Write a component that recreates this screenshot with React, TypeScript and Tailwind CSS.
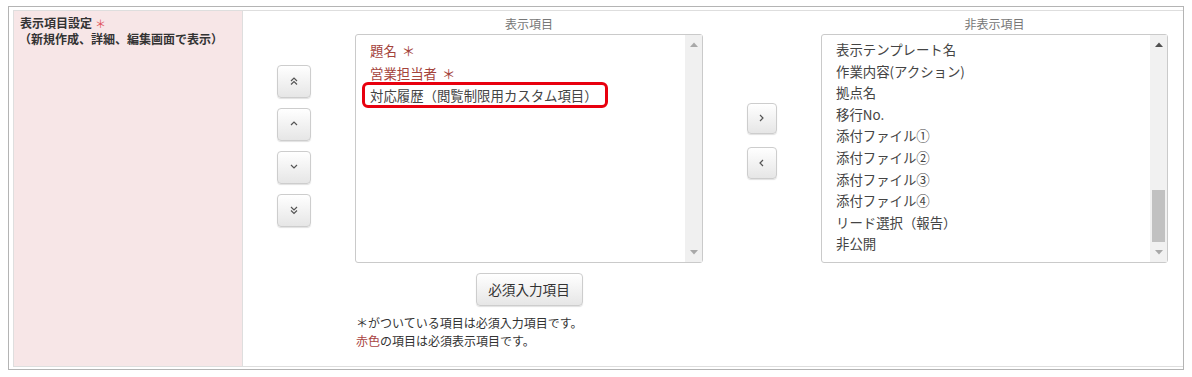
import React from "react";

const FONT = { fontFamily: '"Noto Sans CJK JP", "Noto Sans", sans-serif' };

function Chevron({ dir, double }: { dir: "up" | "down" | "left" | "right"; double?: boolean }) {
  const single = {
    up: "M1 5 L4 2 L7 5",
    down: "M1 2 L4 5 L7 2",
    left: "M5 1 L2 4 L5 7",
    right: "M2 1 L5 4 L2 7",
  }[dir];
  const dbl = {
    up: ["M1 4 L4 1 L7 4", "M1 7.5 L4 4.5 L7 7.5"],
    down: ["M1 1 L4 4 L7 1", "M1 4.5 L4 7.5 L7 4.5"],
    left: [],
    right: [],
  }[dir];
  return (
    <svg width="8" height="9" viewBox="0 0 8 9" fill="none" stroke="#555" strokeWidth="1.2">
      {double ? dbl.map((d, i) => <path key={i} d={d} />) : <path d={single} />}
    </svg>
  );
}

function Btn({ children, cls }: { children: React.ReactNode; cls: string }) {
  return (
    <div
      className={
        "flex items-center justify-center rounded-[4px] border border-[#cdcdcd] bg-gradient-to-b from-[#ffffff] to-[#e6e6e6] shadow-[0_1px_1px_rgba(0,0,0,0.12)] " +
        cls
      }
    >
      {children}
    </div>
  );
}

function Tri({ up, color }: { up?: boolean; color: string }) {
  return (
    <svg width="8" height="5" viewBox="0 0 8 5">
      <path d={up ? "M0 5 L4 0.5 L8 5 Z" : "M0 0 L4 4.5 L8 0 Z"} fill={color} />
    </svg>
  );
}

const RED = "text-[#a4433b]";

const leftItems: { t: string; star?: boolean }[] = [
  { t: "題名", star: true },
  { t: "営業担当者", star: true },
  { t: "対応履歴（閲覧制限用カスタム項目）" },
];

const rightItems = [
  "表示テンプレート名",
  "作業内容(アクション)",
  "拠点名",
  "移行No.",
  "添付ファイル①",
  "添付ファイル②",
  "添付ファイル③",
  "添付ファイル④",
  "リード選択（報告）",
  "非公開",
];

export default function App() {
  return (
    <div className="min-h-[377px] bg-white text-[#333]" style={FONT}>
      <div className="pt-[6px] pl-[8px]">
        <div className="w-[1176px] h-[364px] border border-[#b4b4b4] pl-[4px] pt-[3px] pb-[2px]">
          <div className="flex h-[357px] border-t border-l border-b border-[#dedede]">
            {/* label cell */}
            <div className="w-[229px] shrink-0 border-r border-[#dedede] bg-[#f7e6e7] pl-[6px] pt-[4px] text-[12px] font-bold leading-[16px] text-[#333]">
              <div>
                表示項目設定<span className="ml-[3px] text-[11px] font-normal text-[#e0525a]">＊</span>
              </div>
              <div className="-ml-[1px]">（新規作成、詳細、編集画面で表示）</div>
            </div>

            {/* content cell */}
            <div className="flex flex-1 items-start pl-[34px]">
              {/* order buttons */}
              <div className="mt-[54px] flex w-[34px] flex-col gap-[10px]">
                <Btn cls="h-[33px]"><Chevron dir="up" double /></Btn>
                <Btn cls="h-[33px]"><Chevron dir="up" /></Btn>
                <Btn cls="h-[33px]"><Chevron dir="down" /></Btn>
                <Btn cls="h-[33px]"><Chevron dir="down" double /></Btn>
              </div>

              {/* visible list */}
              <div className="ml-[44px] flex w-[348px] flex-col pt-[3px]">
                <div className="h-[20px] text-center text-[12px] leading-[20px] text-[#777]">表示項目</div>
                <div className="relative flex h-[229px] rounded-[3px] border border-[#cacaca] bg-white">
                  <div className="flex-1 overflow-hidden pl-[14px] pt-[4px] text-[13.4px] leading-[22.5px] text-[#444]">
                    {leftItems.map((it) => (
                      <div key={it.t} className={it.star ? RED : ""}>
                        {it.t}
                        {it.star && <span className="ml-[5px]">＊</span>}
                      </div>
                    ))}
                  </div>
                  <div className="flex w-[17px] flex-col items-center justify-between bg-[#f0f0f0] py-[7px]">
                    <Tri up color="#a8a8a8" />
                    <Tri color="#a8a8a8" />
                  </div>
                  <div className="absolute left-[6px] top-[47px] h-[26px] w-[246px] rounded-[6px] border-[3px] border-[#e8000e]" />
                </div>
                <div className="mt-[10px] flex justify-center">
                  <Btn cls="h-[33px] w-[107px] text-[13.6px] text-[#333]">必須入力項目</Btn>
                </div>
                <div className="mt-[8px] pl-[1px] text-[12px] leading-[18px] text-[#333]">
                  <div>＊がついている項目は必須入力項目です。</div>
                  <div>
                    <span className="text-[#a94442]">赤色</span>の項目は必須表示項目です。
                  </div>
                </div>
              </div>

              {/* move buttons */}
              <div className="ml-[44px] mt-[92px] flex w-[30px] flex-col gap-[13px]">
                <Btn cls="h-[31px]"><Chevron dir="right" /></Btn>
                <Btn cls="h-[32px]"><Chevron dir="left" /></Btn>
              </div>

              {/* hidden list */}
              <div className="ml-[44px] flex w-[347px] flex-col pt-[3px]">
                <div className="h-[20px] text-center text-[12px] leading-[20px] text-[#777]">非表示項目</div>
                <div className="flex h-[229px] rounded-[3px] border border-[#cacaca] bg-white">
                  <div className="flex-1 overflow-hidden pl-[14px] pt-[4px] text-[13.4px] leading-[21.6px] text-[#444]">
                    {rightItems.map((t) => (
                      <div key={t} className="whitespace-nowrap">{t}</div>
                    ))}
                  </div>
                  <div className="flex w-[17px] flex-col items-center bg-[#f1f1f1] py-[7px]">
                    <Tri up color="#505050" />
                    <div className="flex-1" />
                    <div className="mb-[8px] h-[52px] w-[13px] bg-[#c1c1c1]" />
                    <Tri color="#a8a8a8" />
                  </div>
                </div>
              </div>
            </div>
          </div>
        </div>
      </div>
    </div>
  );
}
